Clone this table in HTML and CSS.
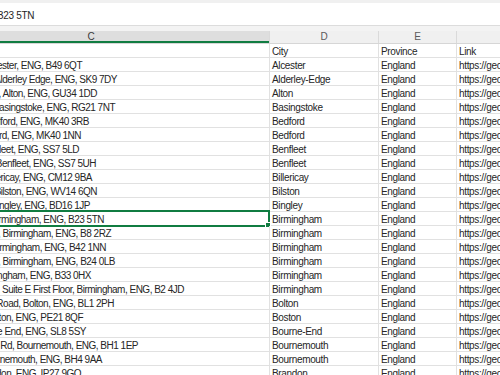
FILE: index.html
```html
<!DOCTYPE html>
<html>
<head>
<meta charset="utf-8">
<link rel="stylesheet" href="styles.css">
</head>
<body>
<div class="app">
  <div class="topstrip"></div>
  <div class="formula"><span class="ftext">B23 5TN</span></div>
  <div class="gap"></div>
  <div class="colheads">
    <div class="ch ch-c sel">C</div>
    <div class="ch ch-d">D</div>
    <div class="ch ch-e">E</div>
    <div class="ch ch-f"></div>
  </div>
  <div class="grid">
    <div class="row"><div class="cell c"></div><div class="cell d">City</div><div class="cell e">Province</div><div class="cell f">Link</div></div>
    <div class="row"><div class="cell c"><span class="txt" style="width:82px">Alcester, ENG, B49 6QT</span></div><div class="cell d">Alcester</div><div class="cell e">England</div><div class="cell f">https://geolocations.example/alcester</div></div>
    <div class="row"><div class="cell c"><span class="txt" style="width:117px">Alderley Edge, ENG, SK9 7DY</span></div><div class="cell d">Alderley-Edge</div><div class="cell e">England</div><div class="cell f">https://geolocations.example/alderley-edge</div></div>
    <div class="row"><div class="cell c"><span class="txt" style="width:97px">Road, Alton, ENG, GU34 1DD</span></div><div class="cell d">Alton</div><div class="cell e">England</div><div class="cell f">https://geolocations.example/alton</div></div>
    <div class="row"><div class="cell c"><span class="txt" style="width:115px">Basingstoke, ENG, RG21 7NT</span></div><div class="cell d">Basingstoke</div><div class="cell e">England</div><div class="cell f">https://geolocations.example/basingstoke</div></div>
    <div class="row"><div class="cell c"><span class="txt" style="width:89px">Bedford, ENG, MK40 3RB</span></div><div class="cell d">Bedford</div><div class="cell e">England</div><div class="cell f">https://geolocations.example/bedford</div></div>
    <div class="row"><div class="cell c"><span class="txt" style="width:81px">Bedford, ENG, MK40 1NN</span></div><div class="cell d">Bedford</div><div class="cell e">England</div><div class="cell f">https://geolocations.example/bedford</div></div>
    <div class="row"><div class="cell c"><span class="txt" style="width:79px">Benfleet, ENG, SS7 5LD</span></div><div class="cell d">Benfleet</div><div class="cell e">England</div><div class="cell f">https://geolocations.example/benfleet</div></div>
    <div class="row"><div class="cell c"><span class="txt" style="width:96px">Benfleet, ENG, SS7 5UH</span></div><div class="cell d">Benfleet</div><div class="cell e">England</div><div class="cell f">https://geolocations.example/benfleet</div></div>
    <div class="row"><div class="cell c"><span class="txt" style="width:92px">Billericay, ENG, CM12 9BA</span></div><div class="cell d">Billericay</div><div class="cell e">England</div><div class="cell f">https://geolocations.example/billericay</div></div>
    <div class="row"><div class="cell c"><span class="txt" style="width:97px">Bilston, ENG, WV14 6QN</span></div><div class="cell d">Bilston</div><div class="cell e">England</div><div class="cell f">https://geolocations.example/bilston</div></div>
    <div class="row"><div class="cell c"><span class="txt" style="width:90px">Bingley, ENG, BD16 1JP</span></div><div class="cell d">Bingley</div><div class="cell e">England</div><div class="cell f">https://geolocations.example/bingley</div></div>
    <div class="row active"><div class="cell c"><span class="txt" style="width:104px">Birmingham, ENG, B23 5TN</span><div class="selbox"><div class="handle"></div></div></div><div class="cell d">Birmingham</div><div class="cell e">England</div><div class="cell f">https://geolocations.example/birmingham</div></div>
    <div class="row"><div class="cell c"><span class="txt" style="width:111px">Road, Birmingham, ENG, B8 2RZ</span></div><div class="cell d">Birmingham</div><div class="cell e">England</div><div class="cell f">https://geolocations.example/birmingham</div></div>
    <div class="row"><div class="cell c"><span class="txt" style="width:106px">Birmingham, ENG, B42 1NN</span></div><div class="cell d">Birmingham</div><div class="cell e">England</div><div class="cell f">https://geolocations.example/birmingham</div></div>
    <div class="row"><div class="cell c"><span class="txt" style="width:115px">Road, Birmingham, ENG, B24 0LB</span></div><div class="cell d">Birmingham</div><div class="cell e">England</div><div class="cell f">https://geolocations.example/birmingham</div></div>
    <div class="row"><div class="cell c"><span class="txt" style="width:91px">Birmingham, ENG, B33 0HX</span></div><div class="cell d">Birmingham</div><div class="cell e">England</div><div class="cell f">https://geolocations.example/birmingham</div></div>
    <div class="row"><div class="cell c"><span class="txt" style="width:184px">Unit 1, Suite E First Floor, Birmingham, ENG, B2 4JD</span></div><div class="cell d">Birmingham</div><div class="cell e">England</div><div class="cell f">https://geolocations.example/birmingham</div></div>
    <div class="row"><div class="cell c"><span class="txt" style="width:114px">Bradshawgate Road, Bolton, ENG, BL1 2PH</span></div><div class="cell d">Bolton</div><div class="cell e">England</div><div class="cell f">https://geolocations.example/bolton</div></div>
    <div class="row"><div class="cell c"><span class="txt" style="width:83px">Boston, ENG, PE21 8QF</span></div><div class="cell d">Boston</div><div class="cell e">England</div><div class="cell f">https://geolocations.example/boston</div></div>
    <div class="row"><div class="cell c"><span class="txt" style="width:86px">Bourne End, ENG, SL8 5SY</span></div><div class="cell d">Bourne-End</div><div class="cell e">England</div><div class="cell f">https://geolocations.example/bourne-end</div></div>
    <div class="row"><div class="cell c"><span class="txt" style="width:138px">Old Christchurch Rd, Bournemouth, ENG, BH1 1EP</span></div><div class="cell d">Bournemouth</div><div class="cell e">England</div><div class="cell f">https://geolocations.example/bournemouth</div></div>
    <div class="row"><div class="cell c"><span class="txt" style="width:102px">Bournemouth, ENG, BH4 9AA</span></div><div class="cell d">Bournemouth</div><div class="cell e">England</div><div class="cell f">https://geolocations.example/bournemouth</div></div>
    <div class="row"><div class="cell c"><span class="txt" style="width:81px">Brandon, ENG, IP27 9GQ</span></div><div class="cell d">Brandon</div><div class="cell e">England</div><div class="cell f">https://geolocations.example/brandon</div></div>
  </div>
</div>
</body>
</html>
```
FILE: styles.css
```css
html, body {
  margin: 0;
  padding: 0;
  width: 500px;
  height: 375px;
  overflow: hidden;
  background: #ffffff;
}
.app {
  font-family: "Liberation Sans", Arial, sans-serif;
  font-size: 10px;
  letter-spacing: -0.35px;
  color: #262626;
  width: 500px;
  height: 375px;
  overflow: hidden;
  display: flex;
  flex-direction: column;
}
.topstrip {
  height: 3px;
  background: #f0f0f0;
  flex: none;
}
.formula {
  height: 22px;
  background: #ffffff;
  flex: none;
  display: flex;
  align-items: center;
  white-space: nowrap;
}
.ftext {
  margin-left: -3px;
  padding-top: 2px;
}
.gap {
  height: 5px;
  background: #f3f3f3;
  border-top: 1px solid #dcdcdc;
  flex: none;
}
.colheads {
  flex: none;
  display: flex;
  height: 12px;
  margin-left: -87px;
  background: #f0f0f0;
  border-bottom: 1px solid #d6d6d6;
}
.ch {
  flex: none;
  text-align: center;
  line-height: 12px;
  color: #5a5a5a;
  letter-spacing: 0;
  box-sizing: border-box;
  border-right: 1px solid #dadada;
}
.ch-c { width: 357px; }
.ch-d { width: 109px; }
.ch-e { width: 78px; }
.ch-f { flex: 1; border-right: none; }
.ch.sel {
  background: #dedede;
  box-shadow: inset 0 -2px 0 #107c41;
  color: #3a3a3a;
}
.grid {
  flex: 1;
  display: flex;
  flex-direction: column;
}
.row {
  flex: none;
  display: flex;
  height: 14px;
  box-sizing: border-box;
  border-bottom: 1px solid #e1e1e1;
  margin-left: -87px;
  white-space: nowrap;
}
.cell {
  flex: none;
  box-sizing: border-box;
  border-right: 1px solid #e1e1e1;
  padding-top: 2px;
  line-height: 12px;
  overflow: hidden;
}
.cell.c {
  width: 357px;
  display: flex;
  padding-left: 87px;
  overflow: visible;
  position: relative;
  letter-spacing: -0.5px;
}
.cell.d { width: 109px; padding-left: 2px; }
.cell.e { width: 78px; padding-left: 2px; }
.cell.f { flex: 1; border-right: none; padding-left: 2px; }
.txt {
  flex: none;
  display: flex;
  justify-content: flex-end;
  white-space: pre;
}
.selbox {
  position: absolute;
  left: 0;
  right: -1px;
  top: -2px;
  bottom: -2px;
  border: 2px solid #107c41;
  border-left: none;
}
.handle {
  position: absolute;
  right: -3px;
  bottom: -3px;
  width: 4px;
  height: 4px;
  background: #107c41;
  border: 1px solid #ffffff;
}
```
